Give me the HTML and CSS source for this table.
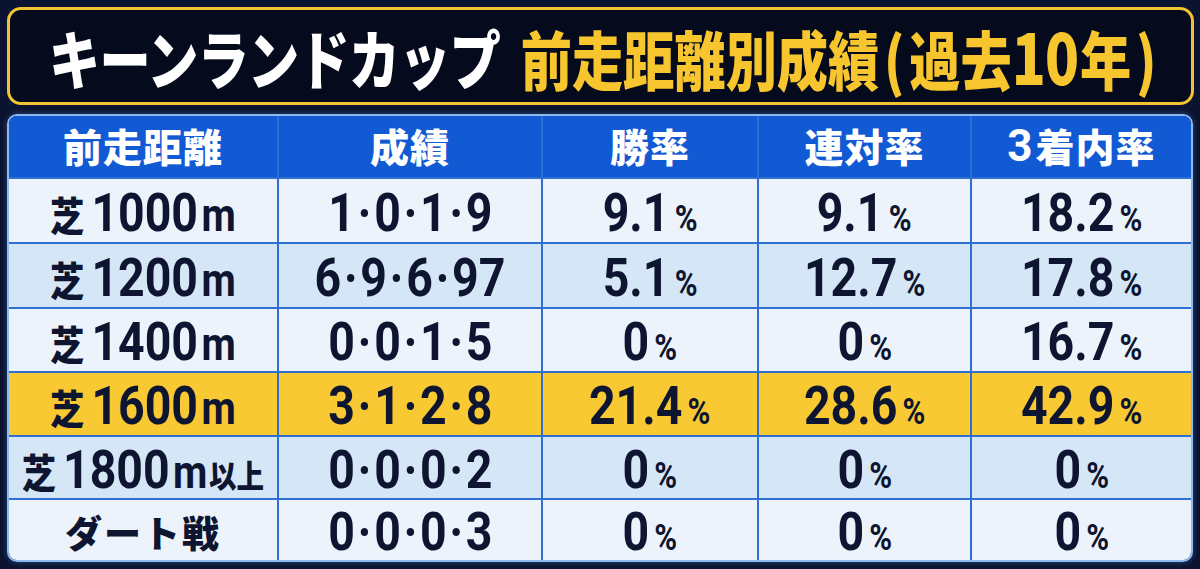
FILE: index.html
```html
<!DOCTYPE html>
<html lang="ja">
<head>
<meta charset="utf-8">
<title>キーンランドカップ 前走距離別成績</title>
<link rel="stylesheet" href="styles.css">
</head>
<body>
<div class="page">
  <div class="title">
    <div class="title-inner">
      <span class="t-white">キーンランドカップ</span>
      <span class="t-yellow">前走距離別成績<span class="paren">(</span>過去<span class="t-num">10</span>年<span class="paren">)</span></span>
    </div>
  </div>
  <div class="table">
    <div class="row head">
      <div class="cell">前走距離</div>
      <div class="cell">成績</div>
      <div class="cell">勝率</div>
      <div class="cell">連対率</div>
      <div class="cell"><span class="hnum">3</span>着内率</div>
    </div>
    <div class="row light r1">
      <div class="cell"><span class="v"><span class="shiba">芝</span>1000<span class="unit">m</span></span></div>
      <div class="cell"><span class="v">1<span class="dot">·</span>0<span class="dot">·</span>1<span class="dot">·</span>9</span></div>
      <div class="cell"><span class="v">9.1<span class="pct">%</span></span></div>
      <div class="cell"><span class="v">9.1<span class="pct">%</span></span></div>
      <div class="cell"><span class="v">18.2<span class="pct">%</span></span></div>
    </div>
    <div class="row blue r2">
      <div class="cell"><span class="v"><span class="shiba">芝</span>1200<span class="unit">m</span></span></div>
      <div class="cell"><span class="v">6<span class="dot">·</span>9<span class="dot">·</span>6<span class="dot">·</span>97</span></div>
      <div class="cell"><span class="v">5.1<span class="pct">%</span></span></div>
      <div class="cell"><span class="v">12.7<span class="pct">%</span></span></div>
      <div class="cell"><span class="v">17.8<span class="pct">%</span></span></div>
    </div>
    <div class="row light r3">
      <div class="cell"><span class="v"><span class="shiba">芝</span>1400<span class="unit">m</span></span></div>
      <div class="cell"><span class="v">0<span class="dot">·</span>0<span class="dot">·</span>1<span class="dot">·</span>5</span></div>
      <div class="cell"><span class="v">0<span class="pct">%</span></span></div>
      <div class="cell"><span class="v">0<span class="pct">%</span></span></div>
      <div class="cell"><span class="v">16.7<span class="pct">%</span></span></div>
    </div>
    <div class="row yellow r4">
      <div class="cell"><span class="v"><span class="shiba">芝</span>1600<span class="unit">m</span></span></div>
      <div class="cell"><span class="v">3<span class="dot">·</span>1<span class="dot">·</span>2<span class="dot">·</span>8</span></div>
      <div class="cell"><span class="v">21.4<span class="pct">%</span></span></div>
      <div class="cell"><span class="v">28.6<span class="pct">%</span></span></div>
      <div class="cell"><span class="v">42.9<span class="pct">%</span></span></div>
    </div>
    <div class="row blue r5">
      <div class="cell"><span class="v"><span class="shiba">芝</span>1800<span class="unit">m</span><span class="ijo">以上</span></span></div>
      <div class="cell"><span class="v">0<span class="dot">·</span>0<span class="dot">·</span>0<span class="dot">·</span>2</span></div>
      <div class="cell"><span class="v">0<span class="pct">%</span></span></div>
      <div class="cell"><span class="v">0<span class="pct">%</span></span></div>
      <div class="cell"><span class="v">0<span class="pct">%</span></span></div>
    </div>
    <div class="row light r6">
      <div class="cell"><span class="dirt">ダート戦</span></div>
      <div class="cell"><span class="v">0<span class="dot">·</span>0<span class="dot">·</span>0<span class="dot">·</span>3</span></div>
      <div class="cell"><span class="v">0<span class="pct">%</span></span></div>
      <div class="cell"><span class="v">0<span class="pct">%</span></span></div>
      <div class="cell"><span class="v">0<span class="pct">%</span></span></div>
    </div>
  </div>
</div>
</body>
</html>
```

FILE: styles.css
```css
html, body {
  margin: 0;
  padding: 0;
}
body {
  width: 1200px;
  height: 569px;
  overflow: hidden;
  background: #0a1330;
  font-family: "Noto Sans CJK JP", "Noto Sans", sans-serif;
}
.page {
  padding: 7px 6px 0 7px;
  display: flex;
  flex-direction: column;
  gap: 9px;
}
.title {
  height: 92px;
  border: 3px solid #f2c232;
  border-radius: 14px;
  background: #050a1c;
  display: flex;
  align-items: center;
  padding-left: 39px;
}
.title-inner {
  display: flex;
  align-items: center;
  gap: 26px;
  white-space: nowrap;
  font-weight: 900;
  font-size: 64px;
  line-height: 1;
  transform: scaleX(0.8);
  transform-origin: left center;
  flex: none;
  margin-right: -300px;
}
.t-white {
  color: #ffffff;
  letter-spacing: -1px;
}
.t-yellow {
  color: #f7c52e;
  letter-spacing: 0;
}
.t-num {
  font-size: 70px;
  line-height: 64px;
  letter-spacing: -1px;
  margin: 0 2px 0 0;
}
.paren {
  margin: 0 6px;
}
.table {
  width: 1182px;
  border: 2px solid #8ab8f0;
  border-radius: 10px;
  overflow: hidden;
  display: flex;
  flex-direction: column;
  box-shadow: 0 0 6px rgba(120, 170, 240, 0.35);
}
.row {
  display: grid;
  grid-template-columns: 268px 264px 216px 213px 221px;
  height: 64px;
  border-top: 2px solid #2f6fd2;
  box-sizing: border-box;
}
.row.head {
  height: 61px;
  border-top: none;
  background: #1259d4;
}
.r1, .r2 { height: 65px; }
.r5 { height: 63px; }
.r6 { height: 62px; }
.cell {
  display: flex;
  align-items: center;
  justify-content: center;
  border-left: 2px solid #2f6fd2;
  box-sizing: border-box;
  color: #0d1530;
  line-height: 1;
  white-space: nowrap;
}
.cell:first-child { border-left: none; }
.head .cell {
  color: #ffffff;
  font-weight: 900;
  font-size: 39px;
  letter-spacing: 1px;
  padding-bottom: 2px;
}
.hnum {
  font-family: Roboto, "DejaVu Sans", sans-serif;
  font-weight: 700;
  font-size: 44px;
  margin-right: 2px;
}
.light { background: #edf3fa; }
.blue { background: #d5e6f6; }
.yellow { background: #f8c932; }
.v {
  display: inline-block;
  font-family: Roboto, "DejaVu Sans", sans-serif;
  font-weight: 700;
  font-size: 54px;
  transform: scaleX(0.86);
  padding-top: 4px;
}
.dot {
  margin: 0 3px;
}
.pct {
  font-size: 36px;
  margin-left: 6px;
}
.shiba {
  font-family: "Noto Sans CJK JP", sans-serif;
  font-weight: 900;
  font-size: 40px;
  margin-right: 8px;
}
.unit {
  font-size: 46px;
  margin-left: 4px;
}
.ijo {
  font-family: "Noto Sans CJK JP", sans-serif;
  font-weight: 900;
  font-size: 32px;
  margin-left: 2px;
}
.dirt {
  font-weight: 900;
  font-size: 37px;
  letter-spacing: 2px;
  padding-top: 4px;
}
```
